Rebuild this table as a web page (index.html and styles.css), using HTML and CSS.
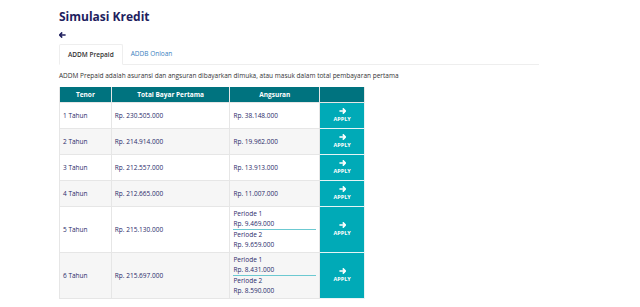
FILE: index.html
```html
<!DOCTYPE html>
<html>
<head>
<meta charset="utf-8">
<link rel="stylesheet" href="styles.css">
</head>
<body>
<div class="page">
  <h1 class="title">Simulasi Kredit</h1>
  <div class="back">
    <svg width="7" height="6" viewBox="0 0 7 6"><path d="M3.2 0.4 L0.7 3 L3.2 5.6 M0.8 3 H6.6" stroke="#1f1f5e" stroke-width="1.6" fill="none"/></svg>
  </div>
  <div class="tabs">
    <div class="tab active">ADDM Prepaid</div>
    <div class="tab">ADDB Onloan</div>
  </div>
  <p class="desc">ADDM Prepaid adalah asuransi dan angsuran dibayarkan dimuka, atau masuk dalam total pembayaran pertama</p>
  <table class="sim">
    <thead>
      <tr><th class="c1">Tenor</th><th class="c2">Total Bayar Pertama</th><th class="c3">Angsuran</th><th class="c4"></th></tr>
    </thead>
    <tbody>
      <tr><td>1 Tahun</td><td>Rp. 230.505.000</td><td>Rp. 38.148.000</td><td class="apply"><svg class="arr" width="7" height="6" viewBox="0 0 7 6"><path d="M3.8 0.4 L6.3 3 L3.8 5.6 M6.2 3 H0.4" stroke="#fff" stroke-width="1.7" fill="none"/></svg>APPLY</td></tr>
      <tr><td>2 Tahun</td><td>Rp. 214.914.000</td><td>Rp. 19.962.000</td><td class="apply"><svg class="arr" width="7" height="6" viewBox="0 0 7 6"><path d="M3.8 0.4 L6.3 3 L3.8 5.6 M6.2 3 H0.4" stroke="#fff" stroke-width="1.7" fill="none"/></svg>APPLY</td></tr>
      <tr><td>3 Tahun</td><td>Rp. 212.557.000</td><td>Rp. 13.913.000</td><td class="apply"><svg class="arr" width="7" height="6" viewBox="0 0 7 6"><path d="M3.8 0.4 L6.3 3 L3.8 5.6 M6.2 3 H0.4" stroke="#fff" stroke-width="1.7" fill="none"/></svg>APPLY</td></tr>
      <tr><td>4 Tahun</td><td>Rp. 212.665.000</td><td>Rp. 11.007.000</td><td class="apply"><svg class="arr" width="7" height="6" viewBox="0 0 7 6"><path d="M3.8 0.4 L6.3 3 L3.8 5.6 M6.2 3 H0.4" stroke="#fff" stroke-width="1.7" fill="none"/></svg>APPLY</td></tr>
      <tr><td>5 Tahun</td><td>Rp. 215.130.000</td><td class="multi"><div class="per">Periode 1<br>Rp. 9.469.000</div><div class="per">Periode 2<br>Rp. 9.659.000</div></td><td class="apply"><svg class="arr" width="7" height="6" viewBox="0 0 7 6"><path d="M3.8 0.4 L6.3 3 L3.8 5.6 M6.2 3 H0.4" stroke="#fff" stroke-width="1.7" fill="none"/></svg>APPLY</td></tr>
      <tr><td>6 Tahun</td><td>Rp. 215.697.000</td><td class="multi"><div class="per">Periode 1<br>Rp. 8.431.000</div><div class="per">Periode 2<br>Rp. 8.590.000</div></td><td class="apply"><svg class="arr" width="7" height="6" viewBox="0 0 7 6"><path d="M3.8 0.4 L6.3 3 L3.8 5.6 M6.2 3 H0.4" stroke="#fff" stroke-width="1.7" fill="none"/></svg>APPLY</td></tr>
    </tbody>
  </table>
</div>
</body>
</html>
```
FILE: styles.css
```css
html, body { margin: 0; padding: 0; background: #fff; }
body { font-family: "Open Sans", "Liberation Sans", sans-serif; color: #2a2a6a; }
.page { padding: 8px 0 0 59px; width: 480px; }
.title { margin: 0; font-size: 12px; line-height: 18px; font-weight: 700; color: #1e1e5e; }
.back { height: 8px; margin-top: 5px; display: flex; align-items: center; }
.back svg { display: block; }
.tabs { display: flex; margin-top: 5px; border-bottom: 1px solid #eeeeee; height: 20px; }
.tab { font-size: 6.5px; line-height: 20px; padding: 0 8px; color: #3a7fc0; }
.tab.active { color: #333; border: 1px solid #eeeeee; border-bottom-color: #fff; border-radius: 2px 2px 0 0; margin-bottom: -1px; background: #fff; font-weight: 600; }
.desc { margin: 0; font-size: 6.5px; line-height: 10px; padding-top: 6px; height: 16px; color: #333; }
.sim { border-collapse: collapse; font-size: 6.5px; width: 306px; }
.sim th { background: #00737f; color: #fff; height: 15px; padding: 0; font-weight: 700; border: 1px solid #e6e6e6; border-top: 0; }
.sim th.c1 { width: 51px; }
.sim th.c2 { width: 118px; }
.sim th.c3 { width: 89px; }
.sim th.c4 { width: 44px; }
.sim td { border: 1px solid #e6e6e6; padding: 0 3px; height: 25px; color: #2a2a6a; }
.sim tbody tr:nth-child(even) td { background: #f6f6f6; }
.sim td.apply { background: #00aab7 !important; color: #fff; text-align: center; font-weight: 700; font-size: 5.5px; line-height: 8px; padding: 0; border-color: #e6f4f5; }
.arr { display: block; margin: 0 auto 1px; }
.sim td.multi { padding: 2px 3px 2px 3px; }
.per { line-height: 10px; }
.per:first-child { border-bottom: 1px solid #6cc9d1; }
```
